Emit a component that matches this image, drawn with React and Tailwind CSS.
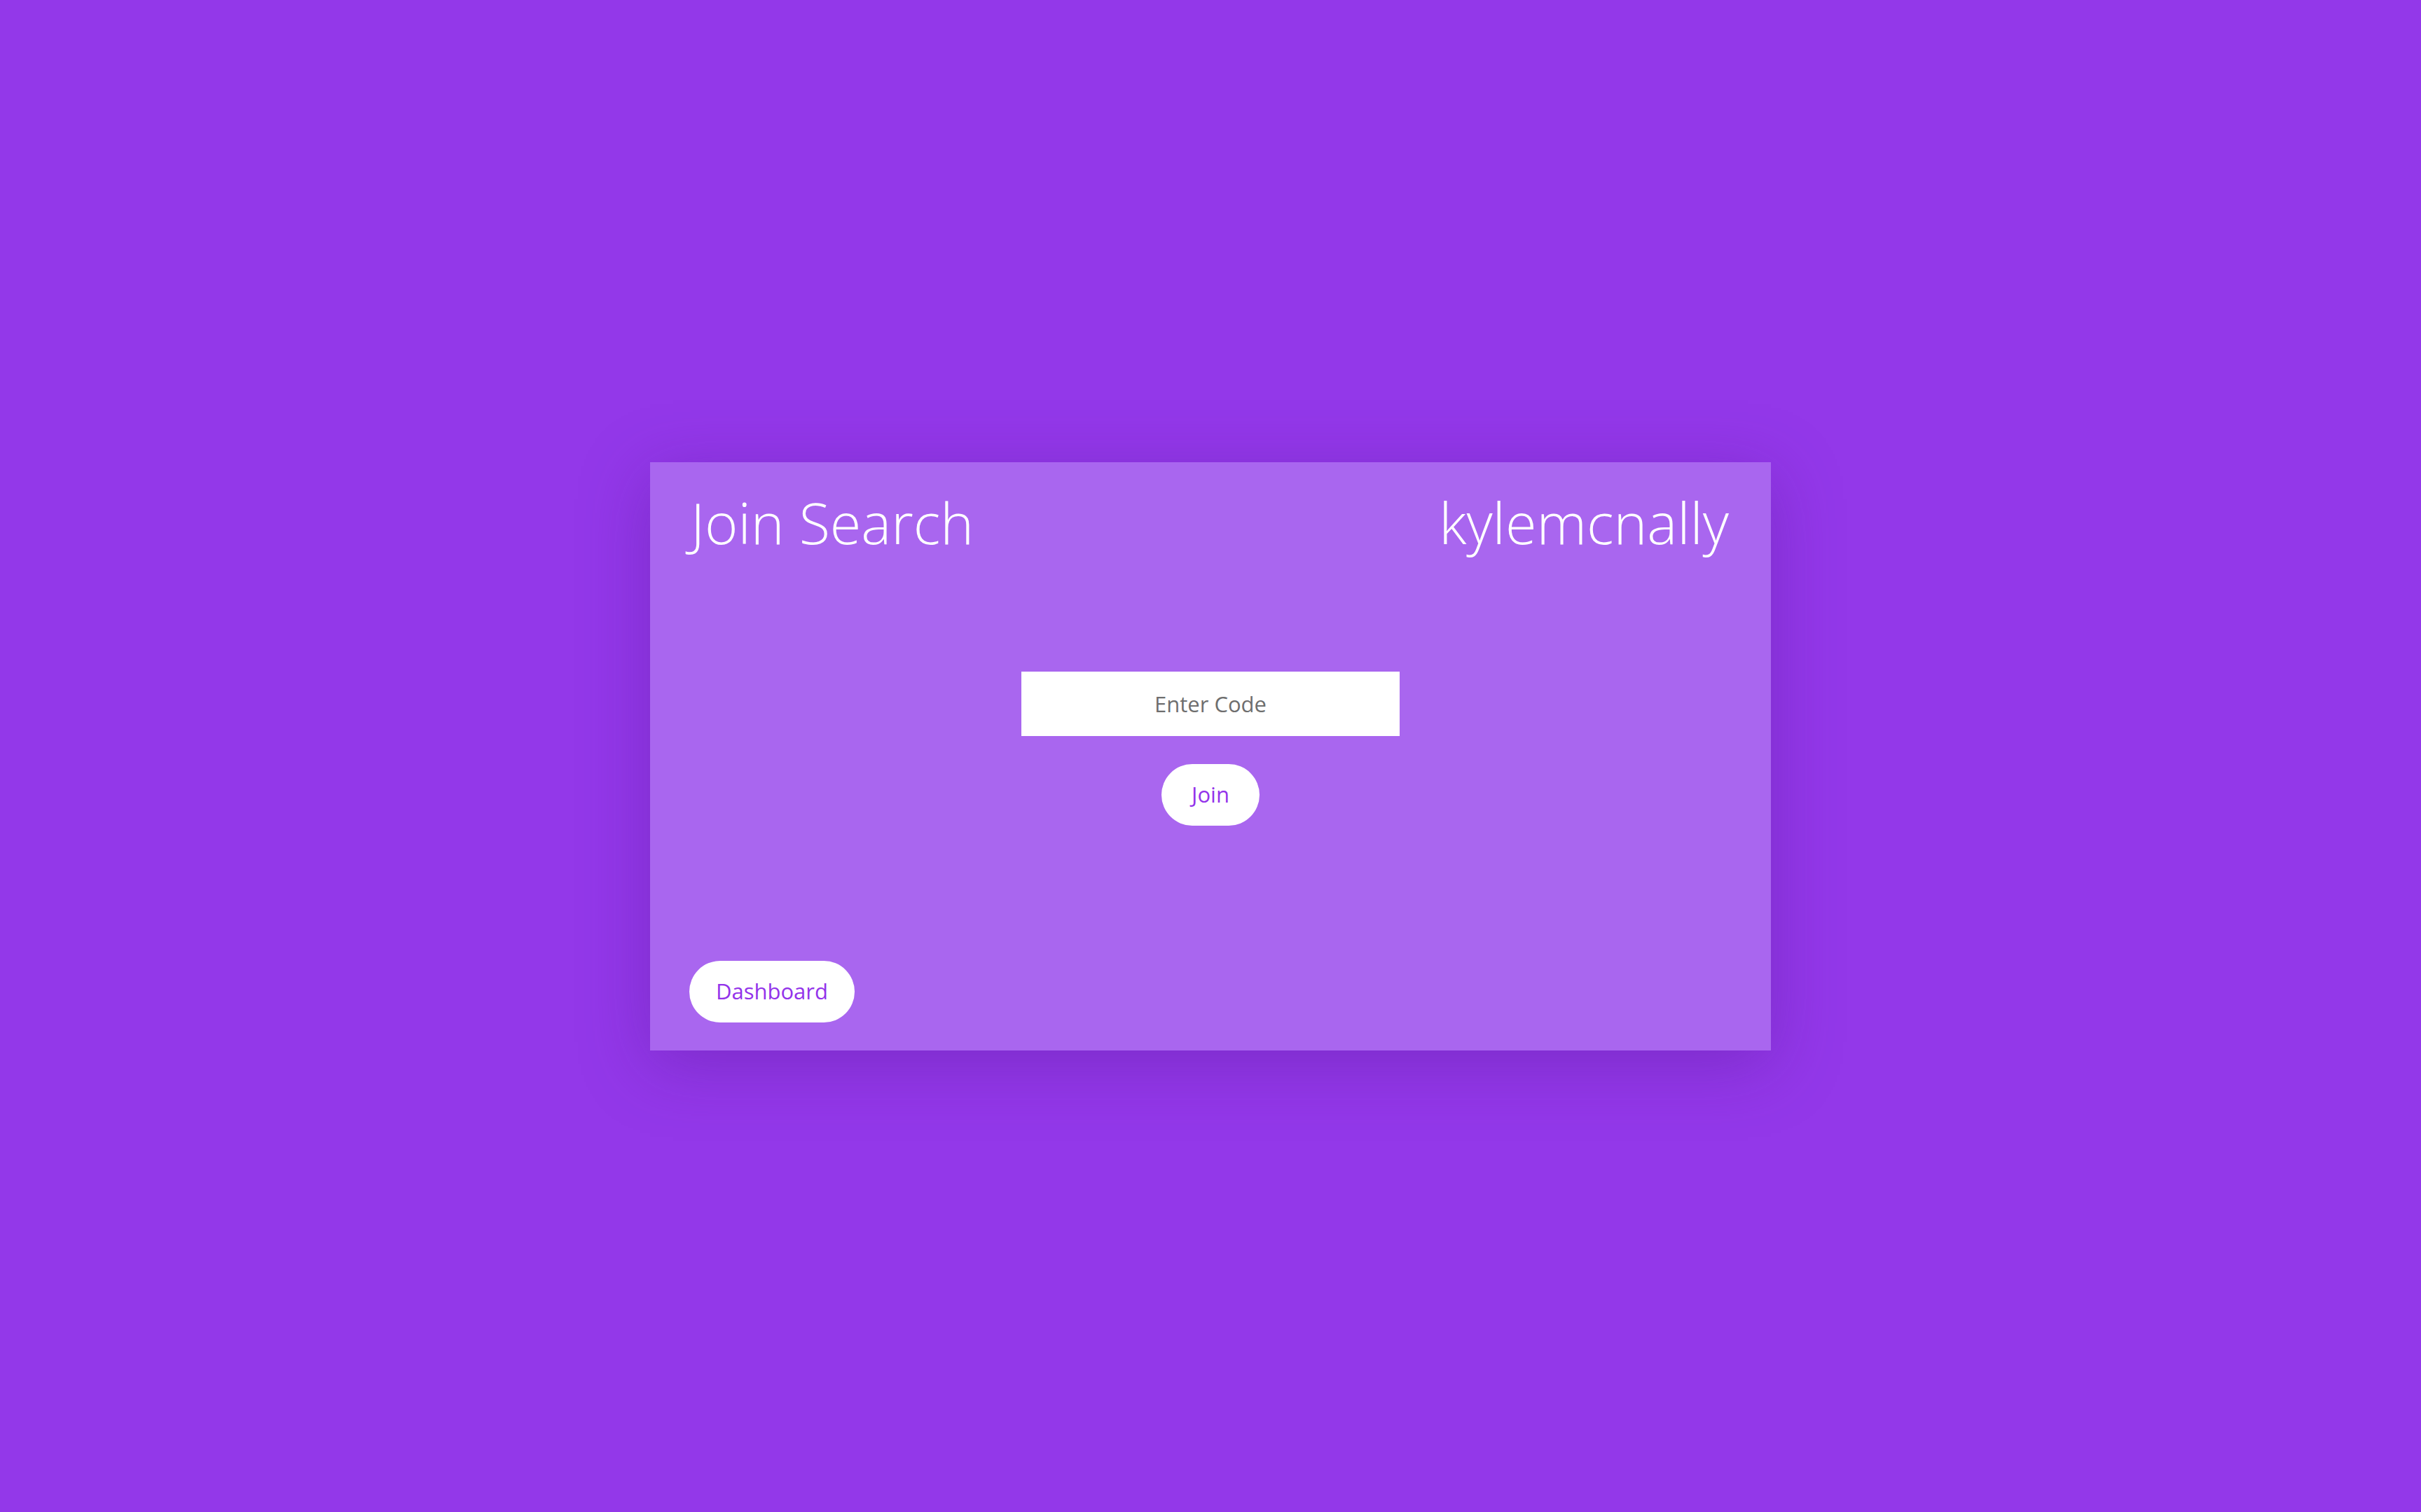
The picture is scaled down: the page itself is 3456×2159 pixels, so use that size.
import { useState } from 'react';

const App = () => {
  const [code, setCode] = useState('');

  return (
    <div className="min-h-screen w-full bg-[#9338e9] flex items-center justify-center font-['Open_Sans',sans-serif] font-light">
      <div className="w-[1600px] h-[840px] bg-[#a966ef] shadow-[0_20px_90px_rgba(80,20,140,0.35)] flex flex-col">
        {/* Header */}
        <div className="h-[150px] flex items-start justify-between pl-[58px] pr-[60px] pt-[45px]">
          <h1 className="text-[81px] leading-none text-white font-light">Join Search</h1>
          <h1 className="text-[81px] leading-none text-white font-light">kylemcnally</h1>
        </div>

        {/* Code form */}
        <div className="flex flex-col items-center pt-[149px]">
          <input
            type="text"
            value={code}
            onChange={(e) => setCode(e.target.value)}
            placeholder="Enter Code"
            className="w-[540px] h-[92px] bg-white text-center text-[31px] font-normal text-gray-700 placeholder:text-[#6e6e6e] outline-none"
          />
          <button className="mt-[40px] h-[88px] w-[140px] rounded-full bg-white text-[31px] font-normal text-[#9333ea]">
            Join
          </button>
        </div>

        <div className="flex-1" />

        {/* Footer */}
        <div className="pl-[56px] pb-[40px]">
          <button className="h-[88px] w-[236px] rounded-full bg-white text-[31px] font-normal text-[#9333ea]">
            Dashboard
          </button>
        </div>
      </div>
    </div>
  );
};

export default App;
